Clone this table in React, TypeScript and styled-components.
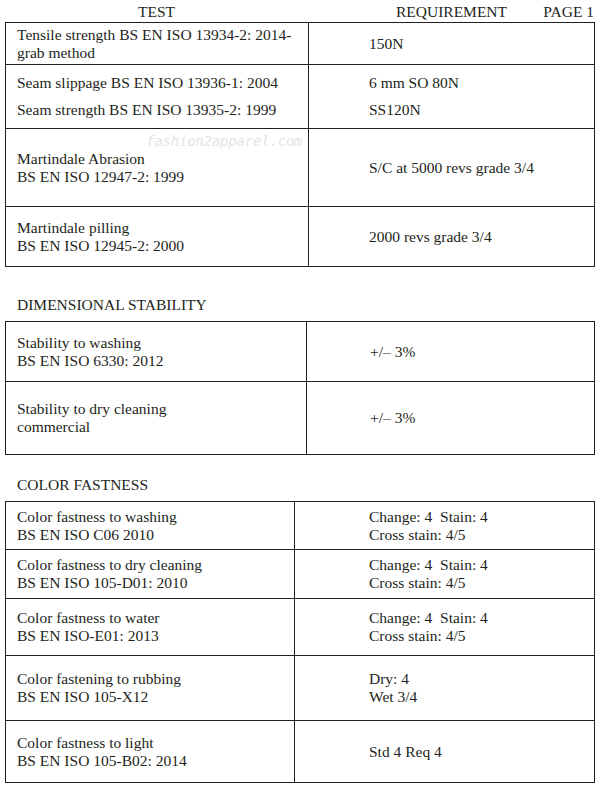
import styled, { createGlobalStyle } from 'styled-components';

const GlobalStyle = createGlobalStyle`
    html, body {
        margin: 0;
        padding: 0;
        background: #ffffff;
    }
    body {
        font-family: 'Liberation Serif', 'DejaVu Serif', serif;
        color: #231f20;
        font-size: 15.5px;
    }
`;

const Page = styled.div`
    position: relative;
    width: 597px;
    height: 788px;
    overflow: hidden;
`;

const Header = styled.div`
    display: grid;
    grid-template-columns: 303px 1fr;
    margin: 0 2px 0 5px;
    height: 22px;
    align-items: center;
    position: relative;
    line-height: 1;
`;

const HeadCell = styled.div`
    text-align: center;
    padding-top: 1px;
`;

const PageNo = styled.span`
    position: absolute;
    right: 1px;
    top: 4px;
`;

const SectionTitle = styled.div<{ $top: number }>`
    margin: ${(p) => p.$top}px 0 8px 17px;
    height: 16px;
    line-height: 16px;
`;

const Table = styled.div<{ $split: number }>`
    margin-left: 5px;
    width: 590px;
    border: 1.5px solid #231f20;
    box-sizing: border-box;
    display: grid;
    grid-template-columns: ${(p) => p.$split}px 1fr;
`;

const Cell = styled.div<{ $h: number; $first?: boolean; $right?: boolean; $pad?: number; $gap?: number }>`
    height: ${(p) => p.$h}px;
    box-sizing: border-box;
    border-top: ${(p) => (p.$first ? 'none' : '1.5px solid #231f20')};
    border-left: ${(p) => (p.$right ? '1.5px solid #231f20' : 'none')};
    padding-left: ${(p) => p.$pad ?? 11}px;
    display: flex;
    flex-direction: column;
    justify-content: center;
    gap: ${(p) => p.$gap ?? 0}px;
    line-height: 18px;
`;

const Watermark = styled.div`
    position: absolute;
    left: 146px;
    top: 133px;
    font-family: 'DejaVu Sans Mono', monospace;
    font-style: italic;
    font-size: 14px;
    letter-spacing: -0.2px;
    color: #e4e4e4;
    pointer-events: none;
`;

type Row = { h: number; test: string[]; req: string[]; gap?: number };

const physical: Row[] = [
    { h: 41, test: ['Tensile strength BS EN ISO 13934-2: 2014-', 'grab method'], req: ['150N'] },
    {
        h: 64,
        test: ['Seam slippage BS EN ISO 13936-1: 2004', 'Seam strength BS EN ISO 13935-2: 1999'],
        req: ['6 mm SO 80N', 'SS120N'],
        gap: 9,
    },
    { h: 78, test: ['Martindale Abrasion', 'BS EN ISO 12947-2: 1999'], req: ['S/C at 5000 revs grade 3/4'] },
    { h: 60, test: ['Martindale pilling', 'BS EN ISO 12945-2: 2000'], req: ['2000 revs grade 3/4'] },
];

const dimensional: Row[] = [
    { h: 59, test: ['Stability to washing', 'BS EN ISO 6330: 2012'], req: ['+/\u2013 3%'] },
    { h: 73, test: ['Stability to dry cleaning', 'commercial'], req: ['+/\u2013 3%'] },
];

const colour: Row[] = [
    { h: 47, test: ['Color fastness to washing', 'BS EN ISO C06 2010'], req: ['Change: 4\u00a0 Stain: 4', 'Cross stain: 4/5'] },
    { h: 49, test: ['Color fastness to dry cleaning', 'BS EN ISO 105-D01: 2010'], req: ['Change: 4\u00a0 Stain: 4', 'Cross stain: 4/5'] },
    { h: 57, test: ['Color fastness to water', 'BS EN ISO-E01: 2013'], req: ['Change: 4\u00a0 Stain: 4', 'Cross stain: 4/5'] },
    { h: 65, test: ['Color fastening to rubbing', 'BS EN ISO 105-X12'], req: ['Dry: 4', 'Wet 3/4'] },
    { h: 62, test: ['Color fastness to light', 'BS EN ISO 105-B02: 2014'], req: ['Std 4 Req 4'] },
];

const SpecTable = ({ rows, split, reqPad }: { rows: Row[]; split: number; reqPad: number }) => (
    <Table $split={split}>
        {rows.map((r, i) => [
            <Cell key={`t${i}`} $h={r.h} $first={i === 0} $gap={r.gap}>
                {r.test.map((l) => (
                    <div key={l}>{l}</div>
                ))}
            </Cell>,
            <Cell key={`r${i}`} $h={r.h} $first={i === 0} $right $pad={reqPad} $gap={r.gap}>
                {r.req.map((l) => (
                    <div key={l}>{l}</div>
                ))}
            </Cell>,
        ])}
    </Table>
);

export default function App() {
    return (
        <Page>
            <GlobalStyle />
            <Header>
                <HeadCell>TEST</HeadCell>
                <HeadCell>REQUIREMENT</HeadCell>
                <PageNo>PAGE 1</PageNo>
            </Header>
            <SpecTable rows={physical} split={302} reqPad={60} />
            <SectionTitle $top={30}>DIMENSIONAL STABILITY</SectionTitle>
            <SpecTable rows={dimensional} split={300} reqPad={63} />
            <SectionTitle $top={22}>COLOR FASTNESS</SectionTitle>
            <SpecTable rows={colour} split={288} reqPad={74} />
            <Watermark>fashion2apparel.com</Watermark>
        </Page>
    );
}
